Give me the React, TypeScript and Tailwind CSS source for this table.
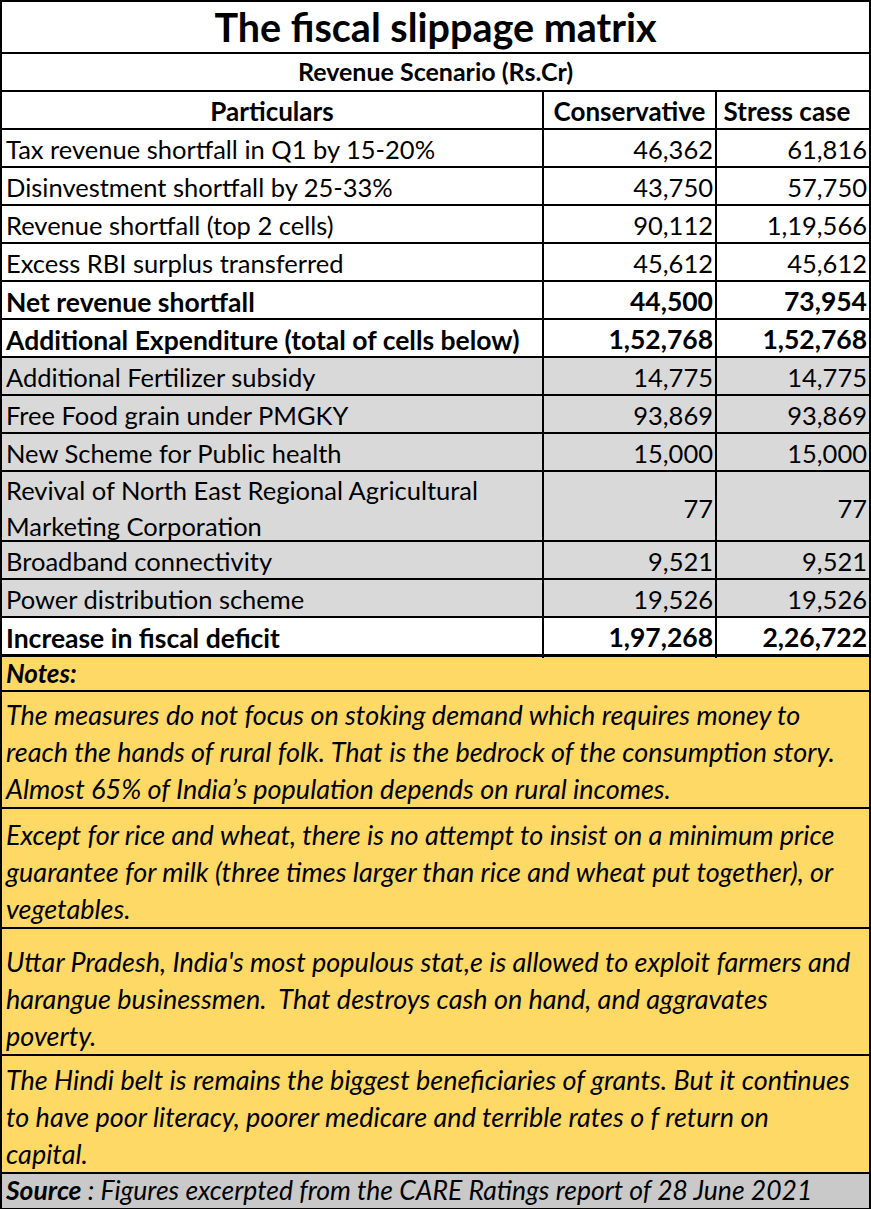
import React from 'react';

type Row = {
  label: React.ReactNode;
  a: string;
  b: string;
  bold?: boolean;
  gray?: boolean;
  h: string;
};

const rows: Row[] = [
  { label: 'Tax revenue shortfall in Q1 by 15-20%', a: '46,362', b: '61,816', h: 'h-[38px]' },
  { label: 'Disinvestment shortfall by 25-33%', a: '43,750', b: '57,750', h: 'h-[38px]' },
  { label: 'Revenue shortfall (top 2 cells)', a: '90,112', b: '1,19,566', h: 'h-[38px]' },
  { label: 'Excess RBI surplus transferred', a: '45,612', b: '45,612', h: 'h-[38px]' },
  { label: 'Net revenue shortfall', a: '44,500', b: '73,954', bold: true, h: 'h-[38px]' },
  { label: 'Additional Expenditure (total of cells below)', a: '1,52,768', b: '1,52,768', bold: true, h: 'h-[38px]' },
  { label: 'Additional Fertilizer subsidy', a: '14,775', b: '14,775', gray: true, h: 'h-[38px]' },
  { label: 'Free Food grain under PMGKY', a: '93,869', b: '93,869', gray: true, h: 'h-[38px]' },
  { label: 'New Scheme for Public health', a: '15,000', b: '15,000', gray: true, h: 'h-[38px]' },
  {
    label: (
      <>
        Revival of North East Regional Agricultural
        <br />
        Marketing Corporation
      </>
    ),
    a: '77',
    b: '77',
    gray: true,
    h: 'h-[70px]',
  },
  { label: 'Broadband connectivity', a: '9,521', b: '9,521', gray: true, h: 'h-[38px]' },
  { label: 'Power distribution scheme', a: '19,526', b: '19,526', gray: true, h: 'h-[38px]' },
  { label: 'Increase in fiscal deficit', a: '1,97,268', b: '2,26,722', bold: true, h: 'h-[38px]' },
];

const notes = [
  {
    lines: [
      'The measures do not focus on stoking demand which requires money to',
      'reach the hands of rural folk. That is the bedrock of the consumption story.',
      'Almost 65% of India\u2019s population depends on rural incomes.',
    ],
    h: 'h-[117px]',
  },
  {
    lines: [
      'Except for rice and wheat, there is no attempt to insist on a minimum price',
      'guarantee for milk (three times larger than rice and wheat put together), or',
      'vegetables.',
    ],
    h: 'h-[120px]',
  },
  {
    lines: [
      "Uttar Pradesh, India's most populous stat,e is allowed to exploit farmers and",
      'harangue businessmen.\u00a0 That destroys cash on hand, and aggravates',
      'poverty.',
    ],
    h: 'h-[127px]',
  },
  {
    lines: [
      'The Hindi belt is remains the biggest beneficiaries of grants. But it continues',
      'to have poor literacy, poorer medicare and terrible rates o f return on',
      'capital.',
    ],
    h: 'h-[118px]',
  },
];

export default function App() {
  return (
    <div className="w-[871px] h-[1209px] bg-white font-['Lato','Liberation_Sans',sans-serif] text-black overflow-hidden">
      <div className="border-2 border-black">
        <div className="h-[52px] border-b-2 border-black flex items-center justify-center text-[39.5px] font-bold leading-none">
          The fiscal slippage matrix
        </div>
        <div className="h-[38px] border-b-2 border-black flex items-center justify-center text-[25px] font-bold">
          Revenue Scenario (Rs.Cr)
        </div>
        <div className="h-[38px] border-b-2 border-black grid grid-cols-[542px_173px_1fr] text-[26px] font-bold">
          <div className="border-r-2 border-black flex items-center justify-center">Particulars</div>
          <div className="border-r-2 border-black flex items-center justify-center">Conservative</div>
          <div className="flex items-center justify-center pr-[12px]">Stress case</div>
        </div>
        {rows.map((r, i) => (
          <div
            key={i}
            className={`${r.h} border-b-2 border-black grid grid-cols-[542px_173px_1fr] ${r.bold ? 'font-bold text-[26.5px]' : 'text-[25.5px]'} ${r.gray ? 'bg-[#d9d9d9]' : 'bg-white'}`}
          >
            <div className="border-r-2 border-black flex items-center px-[4px] leading-[36px] whitespace-nowrap">{r.label}</div>
            <div className="border-r-2 border-black flex items-center justify-end pr-[2px]">{r.a}</div>
            <div className="flex items-center justify-end pr-[2px]">{r.b}</div>
          </div>
        ))}
        <div className="h-[36px] border-t border-b-2 border-black bg-[#ffd966] flex items-center px-[4px] text-[26px] font-bold italic">
          Notes:
        </div>
        {notes.map((n, i) => (
          <div
            key={i}
            className={`${n.h} border-b-2 border-black bg-[#ffd966] flex flex-col justify-end px-[4px] text-[27px] italic leading-[37px]`}
          >
            {n.lines.map((l, j) => (
              <div key={j} className="whitespace-pre">
                {l}
              </div>
            ))}
          </div>
        ))}
        <div className="h-[34px] bg-[#c9c9c9] flex items-center px-[4px] text-[26.5px] italic whitespace-nowrap">
          <span className="font-bold">Source</span>
          <span>&nbsp;: Figures excerpted from the CARE Ratings report of 28 June 2021</span>
        </div>
      </div>
    </div>
  );
}
